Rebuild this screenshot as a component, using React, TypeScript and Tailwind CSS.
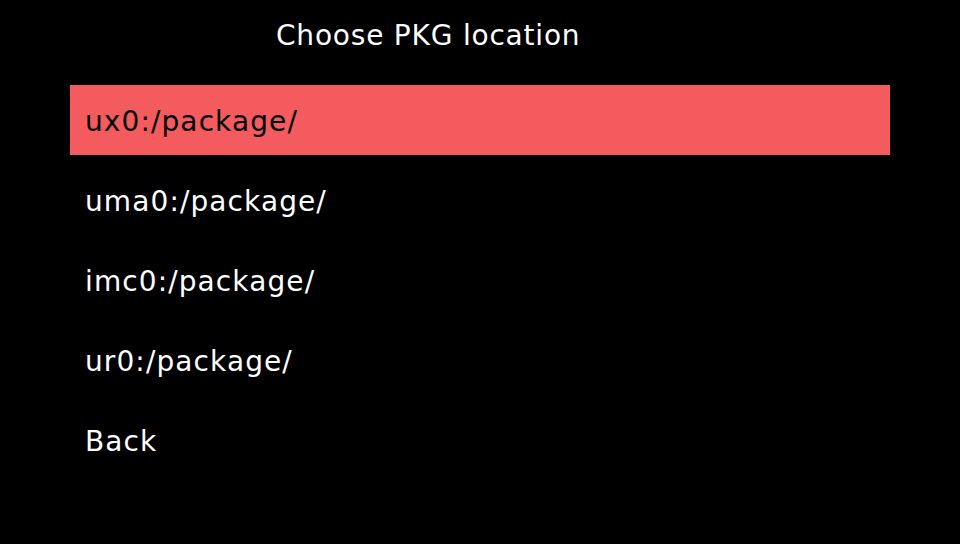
import React from "react";

const items = ["ux0:/package/", "uma0:/package/", "imc0:/package/", "ur0:/package/", "Back"];

export default function App() {
  return (
    <div
      className="w-[960px] h-[544px] bg-black text-white overflow-hidden"
      style={{ fontFamily: '"DejaVu Sans", sans-serif' }}
    >
      <div className="h-[85px] pl-[276px] pt-[19px]">
        <div className="text-[28px] leading-[34px] tracking-[0.8px]">Choose PKG location</div>
      </div>
      <div className="flex flex-col gap-[10px] pl-[70px] pr-[70px]">
        {items.map((t, i) => (
          <div
            key={t}
            className={
              "h-[70px] flex items-center pl-[15px] pt-[3px] text-[28px] tracking-[1.1px] " +
              (i === 0 ? "bg-[#f45b5e] text-black" : "text-white")
            }
          >
            {t}
          </div>
        ))}
      </div>
    </div>
  );
}
